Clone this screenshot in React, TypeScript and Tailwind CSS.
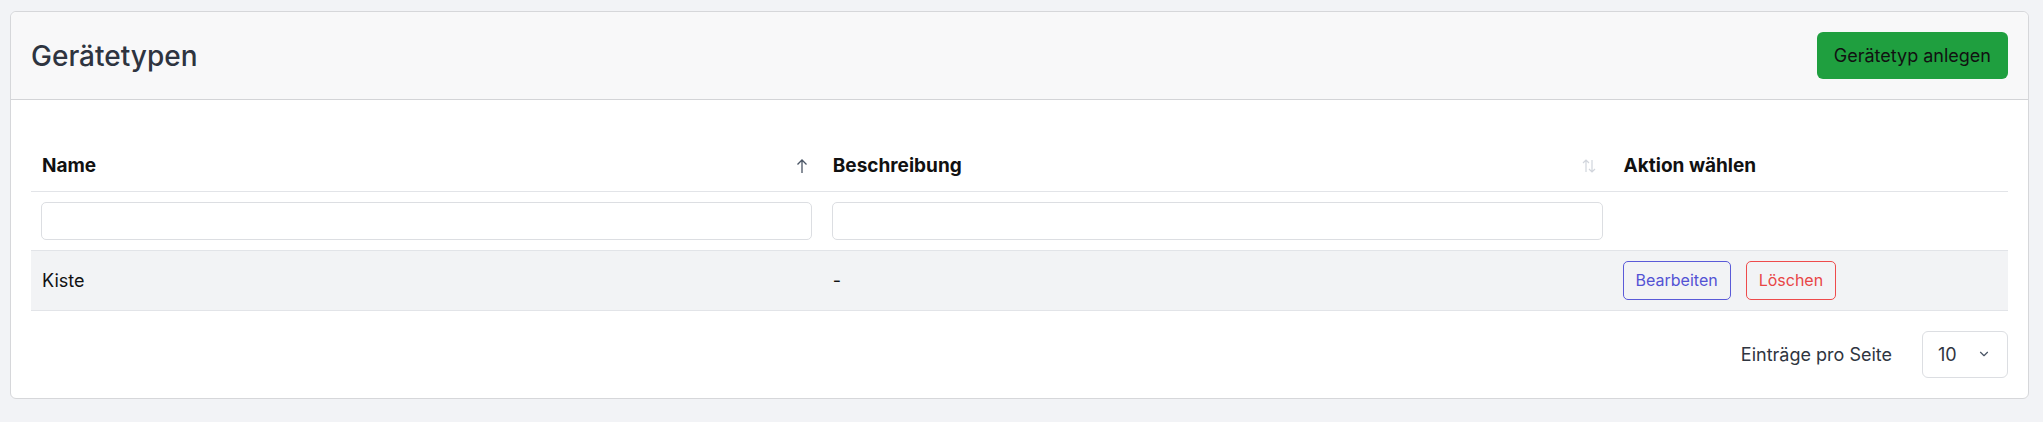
import { ChevronDown } from 'lucide-react';

const rows = [{ name: 'Kiste', beschreibung: '-' }];

function SortUp() {
  return (
    <svg width="12" height="16" viewBox="0 0 12 16" className="text-gray-600">
      <path d="M6 15V2M1.5 6.5L6 2l4.5 4.5" fill="none" stroke="currentColor" strokeWidth="1.3" />
    </svg>
  );
}

function SortBoth() {
  return (
    <svg width="16" height="16" viewBox="0 0 16 16" className="text-gray-300">
      <path d="M5 14V2M2 5l3-3 3 3M11 2v12M8 11l3 3 3-3" fill="none" stroke="currentColor" strokeWidth="1.2" />
    </svg>
  );
}

export default function App() {
  return (
    <div className="min-h-[422px] bg-[#f2f3f6] pt-[11px] pl-[10px] pr-[14px] font-['Inter',sans-serif]">
      <div className="rounded-md border border-[#d6d7da] bg-white">
        <div className="flex items-center justify-between rounded-t-md border-b border-[#d3d4d7] bg-[#f8f8f9] px-5 py-5">
          <h1 className="text-[28px] font-medium text-[#2e3440]">Gerätetypen</h1>
          <button className="h-[47px] rounded-md bg-[#1f9f3f] px-[17px] text-[18px] text-[#111]">
            Gerätetyp anlegen
          </button>
        </div>

        <div className="px-5 pt-[42px] pb-5">
          <table className="w-full table-fixed border-collapse text-[18px] text-[#111]">
            <colgroup>
              <col className="w-[40%]" />
              <col className="w-[40%]" />
              <col className="w-[20%]" />
            </colgroup>
            <thead>
              <tr className="h-[49px] border-b border-[#e2e4e8] text-[19px]">
                <th className="px-[11px] text-left font-bold">
                  <div className="flex items-center justify-between pr-[3px]">
                    <span>Name</span>
                    <SortUp />
                  </div>
                </th>
                <th className="px-[11px] text-left font-bold">
                  <div className="flex items-center justify-between pr-[5px]">
                    <span>Beschreibung</span>
                    <SortBoth />
                  </div>
                </th>
                <th className="px-[11px] text-left font-bold">Aktion wählen</th>
              </tr>
              <tr className="border-b border-[#e2e4e8]">
                <td className="px-[10px] py-[10px]">
                  <input className="block h-[38px] w-full rounded-[5px] border border-[#dcdee2] bg-white" />
                </td>
                <td className="px-[10px] py-[10px]">
                  <input className="block h-[38px] w-full rounded-[5px] border border-[#dcdee2] bg-white" />
                </td>
                <td />
              </tr>
            </thead>
            <tbody>
              {rows.map((row) => (
                <tr key={row.name} className="border-b border-[#e2e4e8] bg-[#f2f3f5]">
                  <td className="px-[11px] py-[10px]">{row.name}</td>
                  <td className="px-[11px] py-[10px]">{row.beschreibung}</td>
                  <td className="px-[10px] py-[10px]">
                    <div className="flex gap-[15px]">
                      <button className="h-[39px] rounded-[5px] border border-[#5a5ad8] px-[12px] text-[16px] text-[#5252d4]">
                        Bearbeiten
                      </button>
                      <button className="h-[39px] rounded-[5px] border border-[#ee4b4b] px-[12px] text-[16px] text-[#e84545]">
                        Löschen
                      </button>
                    </div>
                  </td>
                </tr>
              ))}
            </tbody>
          </table>

          <div className="mt-5 flex items-center justify-end gap-[30px]">
            <span className="text-[18px] text-[#2f3540]">Einträge pro Seite</span>
            <div className="flex h-[47px] w-[86px] items-center justify-between rounded-md border border-[#dcdee2] bg-white pl-[15px] pr-[16px] text-[18px] text-[#2f3540]">
              <span>10</span>
              <ChevronDown size={14} strokeWidth={2} className="text-gray-600" />
            </div>
          </div>
        </div>
      </div>
    </div>
  );
}
